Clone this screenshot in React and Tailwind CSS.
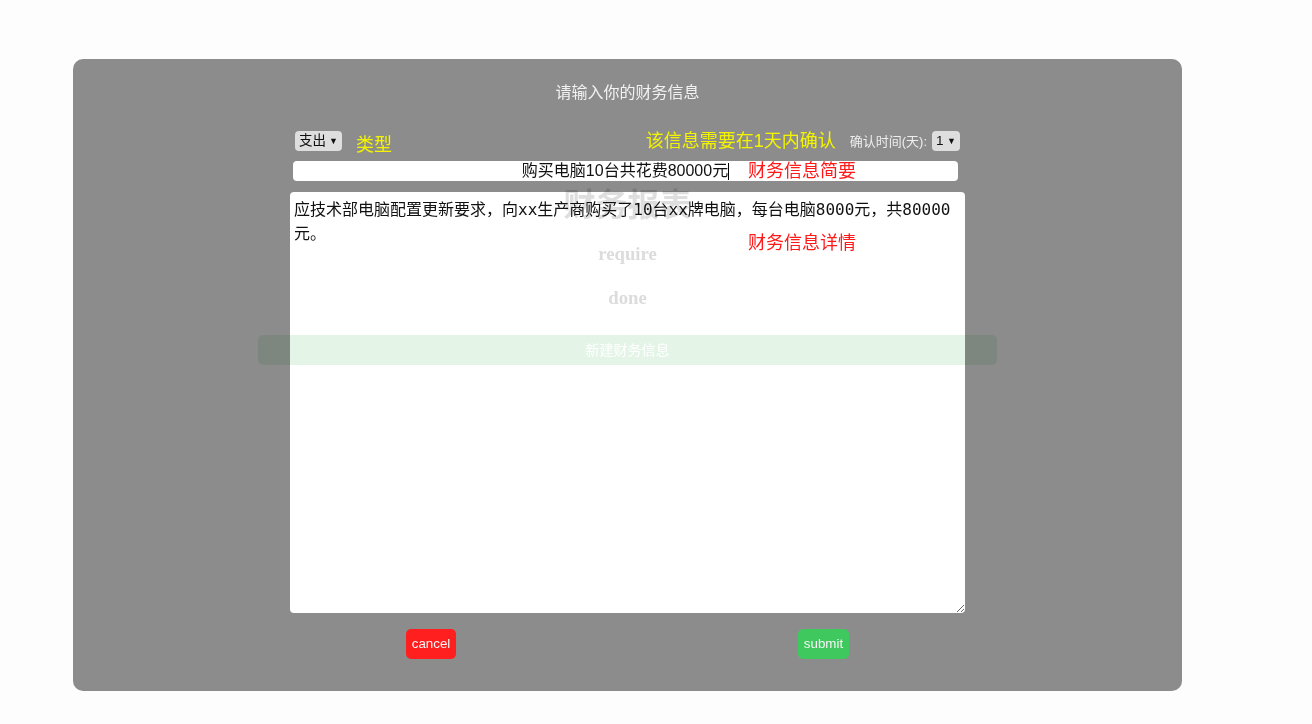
const cjk = "font-['Liberation_Sans','Noto_Sans_CJK_SC',sans-serif]"

const Select = ({ value, width }) => (
  <div className={`flex h-5 ${width} items-center justify-between rounded-[4px] bg-[#dedede] px-[4px] text-[13.5px] text-[#111] ${cjk}`}>
    <span>{value}</span>
    <span className="text-[9px] leading-none">▼</span>
  </div>
)

const GhostPage = () => (
  <div className="pointer-events-none absolute top-0 left-[73px] flex w-[1109px] flex-col items-center mix-blend-multiply">
    <h1 className="mt-[182px] text-[32px] leading-[40px] font-bold text-[#dedede] font-['Noto_Sans_CJK_SC',sans-serif]">财务报表</h1>
    <h3 className="mt-[20px] text-[18.72px] leading-6 font-bold text-[#dcdcdc] font-['Liberation_Serif',serif]">require</h3>
    <h3 className="mt-[20px] text-[18.72px] leading-6 font-bold text-[#dcdcdc] font-['Liberation_Serif',serif]">done</h3>
    <div className={`mt-[25px] flex h-[30px] w-[739px] items-center justify-center rounded-[5px] bg-[#e4f5e8] text-[14px] text-white ${cjk}`}>
      新建财务信息
    </div>
  </div>
)

export default function App() {
  return (
    <div className="relative h-[724px] w-full bg-[#fdfdfd] pt-[59px] pl-[73px]">
      <div className="flex h-[632px] w-[1109px] flex-col items-center rounded-[10px] bg-[#8c8c8c] pt-[22px]">
        <div className={`text-[16px] leading-6 text-[#f2f2f2] ${cjk}`}>请输入你的财务信息</div>

        <div className="mt-[26px] flex w-[675px] flex-col">
          <div className="flex h-5 items-center px-[5px]">
            <Select value="支出" width="w-[47px]" />
            <span className={`ml-[14px] mt-[8px] text-[18px] text-[#f4f400] ${cjk}`}>类型</span>
            <span className={`ml-auto mt-[1px] text-[18px] text-[#f4f400] ${cjk}`}>该信息需要在1天内确认</span>
            <span className={`ml-[14px] mt-[1px] text-[13px] text-[#eeeeee] ${cjk}`}>确认时间(天):</span>
            <div className="ml-[5px]">
              <Select value="1" width="w-[28px]" />
            </div>
          </div>

          <div className="relative mt-[10px] ml-[3px] flex h-5 w-[665px] items-center justify-center rounded-[4px] bg-white">
            <span className={`text-[16px] leading-5 text-[#111] ${cjk}`}>购买电脑10台共花费80000元</span>
            <span className="h-[17px] w-px bg-black" />
            <span className={`absolute top-[-2px] left-[455px] text-[18px] leading-6 text-[#ff1a1a] ${cjk}`}>财务信息简要</span>
          </div>

          <div className="relative mt-[11px]">
            <textarea
              readOnly
              defaultValue="应技术部电脑配置更新要求，向xx生产商购买了10台xx牌电脑，每台电脑8000元，共80000元。"
              className="block h-[421px] w-[675px] rounded-[4px] bg-white px-[4px] pt-[6px] text-[16px] leading-6 text-[#111] outline-none font-['DejaVu_Sans_Mono','Noto_Sans_CJK_SC',monospace]"
            />
            <span className={`absolute top-[39px] left-[458px] text-[18px] leading-6 text-[#ff1a1a] ${cjk}`}>财务信息详情</span>
          </div>
        </div>

        <div className="mt-[16px] flex gap-[342px]">
          <button className="h-[30px] w-[50px] rounded-[5px] bg-[#ff1f1f] text-[13.33px] text-[#f5f5f5] font-['Liberation_Sans',sans-serif]">cancel</button>
          <button className="h-[30px] w-[51px] rounded-[5px] bg-[#3ec85e] text-[13.33px] text-[#f5f5f5] font-['Liberation_Sans',sans-serif]">submit</button>
        </div>
      </div>

      <GhostPage />
    </div>
  )
}
